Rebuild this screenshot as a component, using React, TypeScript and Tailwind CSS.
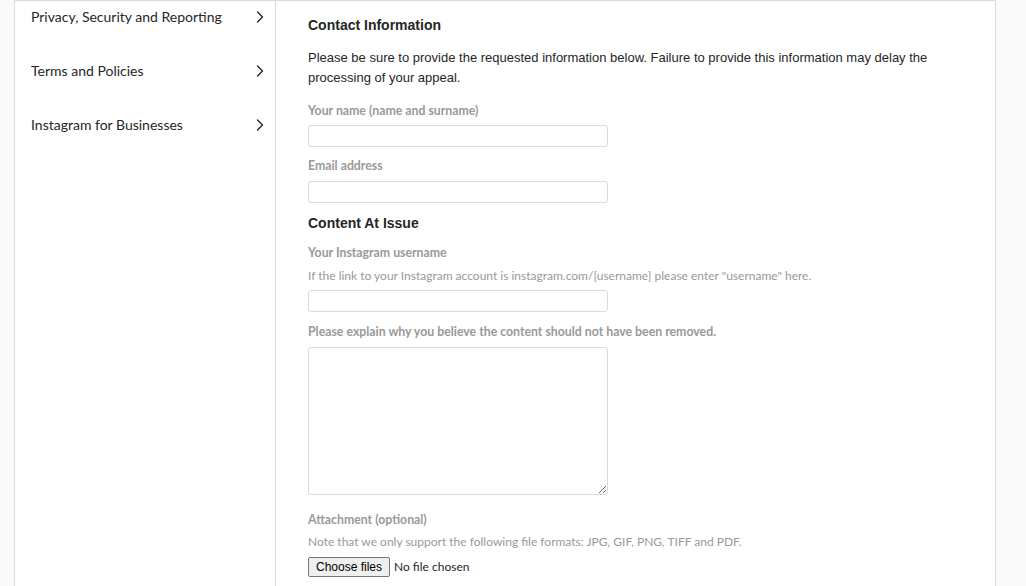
import React from "react";

const Chevron = () => (
  <svg width="10" height="14" viewBox="0 0 10 14" className="shrink-0">
    <path d="M2.5 2 L7.5 7 L2.5 12" fill="none" stroke="#262626" strokeWidth="1.4" strokeLinecap="round" strokeLinejoin="round" />
  </svg>
);

const items = ["Privacy, Security and Reporting", "Terms and Policies", "Instagram for Businesses"];

const proxima = { fontFamily: "Lato, 'Open Sans', sans-serif" };
const arial = { fontFamily: "'Liberation Sans', Arial, sans-serif" };

export default function App() {
  return (
    <div className="w-full h-[586px] bg-[#fafafa] overflow-hidden flex">
      <div className="ml-[14px] w-[982px] h-full flex border-l border-r border-t border-[#dbdbdb] bg-white">
        <aside className="w-[261px] shrink-0 border-r border-[#dbdbdb] pt-[6px] pl-[16px] pr-[10px] flex flex-col gap-[34px]" style={proxima}>
          {items.map((t) => (
            <div key={t} className="flex items-center justify-between h-5 text-[14px] leading-5 text-[#262626]">
              <span>{t}</span>
              <Chevron />
            </div>
          ))}
        </aside>
        <main className="flex-1 pl-[32px] pt-[14px] flex flex-col items-start" style={arial}>
          <h2 className="text-[14px] leading-5 font-bold text-[#262626]">Contact Information</h2>
          <p className="mt-[13px] text-[13px] leading-5 text-[#262626] pr-[40px]">
            Please be sure to provide the requested information below. Failure to provide this information may delay the processing of your appeal.
          </p>
          <label className="mt-[15px] text-[12.3px] leading-4 font-bold text-[#999999]" style={proxima}>Your name (name and surname)</label>
          <input className="mt-[6px] w-[300px] h-[22px] border border-[#dbdbdb] rounded-[3px] bg-white" />
          <label className="mt-[11px] text-[12.3px] leading-4 font-bold text-[#999999]" style={proxima}>Email address</label>
          <input className="mt-[7px] w-[300px] h-[22px] border border-[#dbdbdb] rounded-[3px] bg-white" />
          <h2 className="mt-[10px] text-[14px] leading-5 font-bold text-[#262626]">Content At Issue</h2>
          <label className="mt-[12px] text-[12.3px] leading-4 font-bold text-[#999999]" style={proxima}>Your Instagram username</label>
          <p className="mt-[7px] text-[12px] leading-4 text-[#999999]" style={proxima}>
            If the link to your Instagram account is instagram.com/[username] please enter "username" here.
          </p>
          <input className="mt-[6px] w-[300px] h-[22px] border border-[#dbdbdb] rounded-[3px] bg-white" />
          <label className="mt-[12px] text-[12.3px] leading-4 font-bold text-[#999999]" style={proxima}>
            Please explain why you believe the content should not have been removed.
          </label>
          <textarea className="mt-[7px] w-[300px] h-[148px] border border-[#dbdbdb] rounded-[3px] bg-white block" />
          <label className="mt-[17px] text-[12.3px] leading-4 font-bold text-[#999999]" style={proxima}>Attachment (optional)</label>
          <p className="mt-[6px] text-[12px] leading-4 text-[#999999]" style={proxima}>
            Note that we only support the following file formats: JPG, GIF, PNG, TIFF and PDF.
          </p>
          <div className="mt-[7px] flex items-center gap-[4px]">
            <button className="h-[20px] w-[82px] bg-[#efefef] border border-[#767676] rounded-[2px] text-[12px] text-black leading-none" style={arial}>
              Choose files
            </button>
            <span className="text-[12px] text-[#262626]" style={proxima}>No file chosen</span>
          </div>
        </main>
      </div>
    </div>
  );
}
